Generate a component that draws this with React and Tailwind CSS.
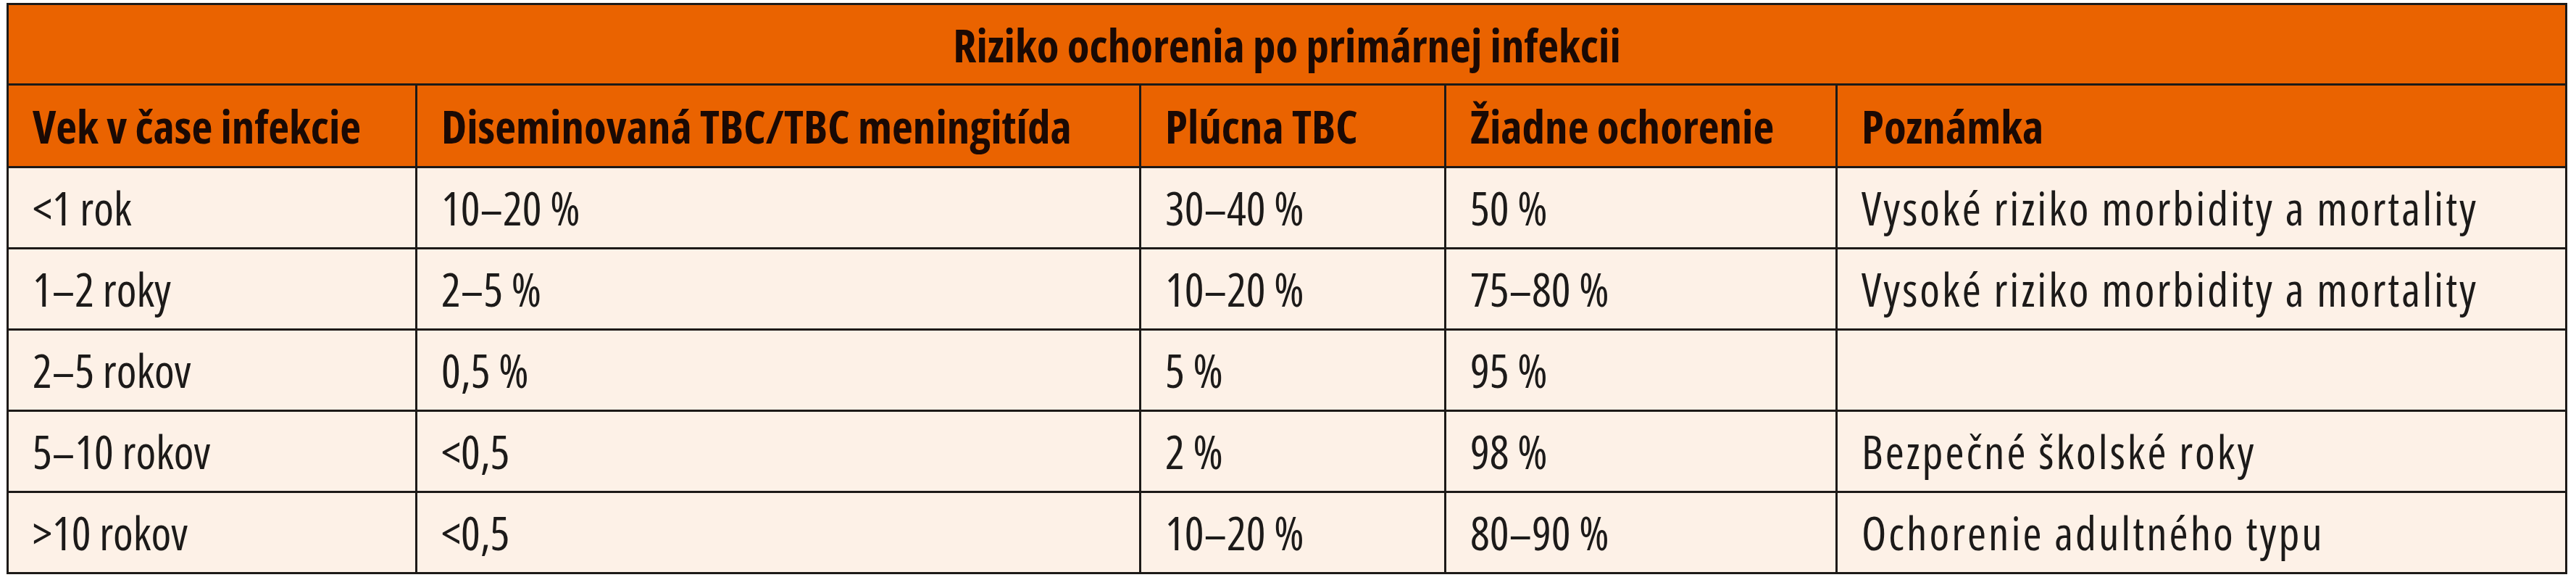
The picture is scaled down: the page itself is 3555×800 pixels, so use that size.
const rows = [
  ['<1 rok', '10–20 %', '30–40 %', '50 %', 'Vysoké riziko morbidity a mortality'],
  ['1–2 roky', '2–5 %', '10–20 %', '75–80 %', 'Vysoké riziko morbidity a mortality'],
  ['2–5 rokov', '0,5 %', '5 %', '95 %', ''],
  ['5–10 rokov', '<0,5', '2 %', '98 %', 'Bezpečné školské roky'],
  ['>10 rokov', '<0,5', '10–20 %', '80–90 %', 'Ochorenie adultného typu'],
];

const headers = [
  'Vek v čase infekcie',
  'Diseminovaná TBC/TBC meningitída',
  'Plúcna TBC',
  'Žiadne ochorenie',
  'Poznámka',
];

export default function App() {
  return (
    <div className="w-[3555px] h-[800px] bg-white pt-[4px] pl-[9px] font-['Open_Sans',sans-serif] font-stretch-[80%] text-[#1c1a19]">
      <table className="w-[3534px] table-fixed border-collapse">
        <colgroup>
          <col className="w-[564px]" />
          <col className="w-[999px]" />
          <col className="w-[421px]" />
          <col className="w-[540px]" />
          <col />
        </colgroup>
        <thead>
          <tr className="h-[111px]">
            <th
              colSpan={5}
              className="border-[3px] border-[#1d1a18] bg-[#ea6300] text-center text-[63px] font-bold leading-none text-[#1a0904]"
            >
              Riziko ochorenia po primárnej infekcii
            </th>
          </tr>
          <tr className="h-[114px]">
            {headers.map((h) => (
              <th
                key={h}
                className="border-[3px] border-[#1d1a18] bg-[#ea6300] pl-[33px] pr-2 text-left text-[63px] font-bold leading-none text-[#1a0904] whitespace-nowrap"
              >
                {h}
              </th>
            ))}
          </tr>
        </thead>
        <tbody>
          {rows.map((r, i) => (
            <tr key={i} className="h-[112px] bg-[#fdf1e7]">
              {r.map((c, j) => (
                <td
                  key={j}
                  className={
                    j === 4
                      ? 'border-[3px] border-[#1d1a18] pl-[33px] pr-2 text-left text-[63px] leading-none whitespace-nowrap tracking-[3px]'
                      : 'border-[3px] border-[#1d1a18] pl-[33px] pr-2 text-left text-[63px] leading-none whitespace-nowrap'
                  }
                >
                  {c}
                </td>
              ))}
            </tr>
          ))}
        </tbody>
      </table>
    </div>
  );
}
